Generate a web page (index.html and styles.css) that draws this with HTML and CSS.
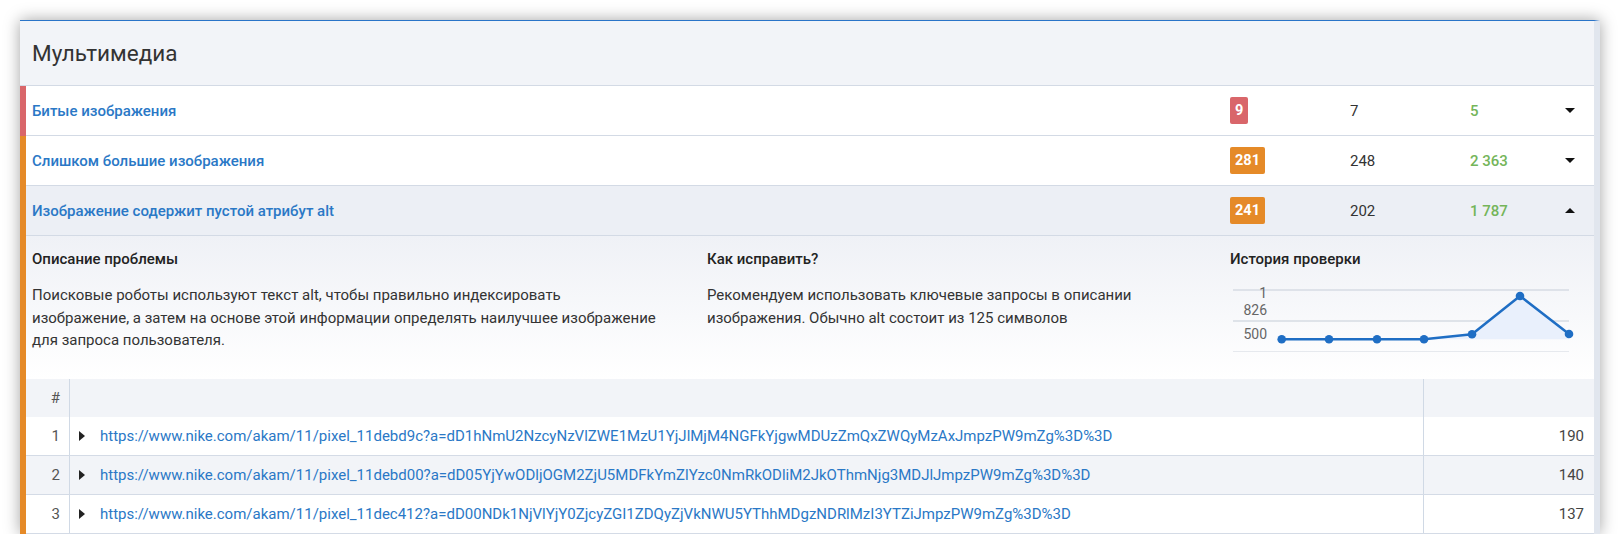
FILE: index.html
```html
<!DOCTYPE html>
<html lang="ru">
<head>
<meta charset="utf-8">
<title>Мультимедиа</title>
<link rel="stylesheet" href="styles.css">
</head>
<body>
<div class="page">
  <section class="card">
    <header class="card-head"><h2 class="card-title">Мультимедиа</h2></header>

    <div class="group group--red">
      <div class="issue">
        <a class="issue-name">Битые изображения</a>
        <div><span class="badge badge--red">9</span></div>
        <div class="count">7</div>
        <div class="fixed">5</div>
        <div class="toggle"><span class="caret caret--down"></span></div>
      </div>
    </div>

    <div class="group group--orange">
      <div class="issue">
        <a class="issue-name">Слишком большие изображения</a>
        <div><span class="badge badge--orange">281</span></div>
        <div class="count">248</div>
        <div class="fixed">2 363</div>
        <div class="toggle"><span class="caret caret--down"></span></div>
      </div>
      <div class="issue issue--open">
        <a class="issue-name">Изображение содержит пустой атрибут alt</a>
        <div><span class="badge badge--orange">241</span></div>
        <div class="count">202</div>
        <div class="fixed">1 787</div>
        <div class="toggle"><span class="caret caret--up"></span></div>
      </div>

      <div class="details">
        <div class="detail-col">
          <h3 class="detail-title">Описание проблемы</h3>
          <p class="detail-text">Поисковые роботы используют текст alt, чтобы правильно индексировать<br>изображение, а затем на основе этой информации определять наилучшее изображение<br>для запроса пользователя.</p>
        </div>
        <div class="detail-col">
          <h3 class="detail-title">Как исправить?</h3>
          <p class="detail-text">Рекомендуем использовать ключевые запросы в описании<br>изображения. Обычно alt состоит из 125 символов</p>
        </div>
        <div class="detail-col">
          <h3 class="detail-title">История проверки</h3>
          <svg class="chart" width="350" height="74" viewBox="0 0 350 74">
            <line x1="3" y1="8" x2="339" y2="8" class="grid"/>
            <line x1="3" y1="39" x2="339" y2="39" class="grid"/>
            <line x1="3" y1="69.5" x2="339" y2="69.5" class="grid grid--light"/>
            <text x="37" y="16" class="axis">1</text>
            <text x="37" y="33" class="axis">826</text>
            <text x="37" y="57" class="axis">500</text>
            <polygon class="area" points="51.7,57.3 99,57.3 147,57.3 194,57.3 242,52.3 290,14 339,52 339,57.3"/>
            <polyline class="line" points="51.7,57.3 99,57.3 147,57.3 194,57.3 242,52.3 290,14 339,52"/>
            <circle cx="51.7" cy="57.3" r="4.3" class="dot"/>
            <circle cx="99" cy="57.3" r="4.3" class="dot"/>
            <circle cx="147" cy="57.3" r="4.3" class="dot"/>
            <circle cx="194" cy="57.3" r="4.3" class="dot"/>
            <circle cx="242" cy="52.3" r="4.3" class="dot"/>
            <circle cx="290" cy="14" r="4.3" class="dot"/>
            <circle cx="339" cy="52" r="4.3" class="dot"/>
          </svg>
        </div>
      </div>

      <div class="table">
        <div class="trow trow--head">
          <div class="tcell tcell--num">#</div>
          <div class="tcell tcell--url"></div>
          <div class="tcell tcell--val"></div>
        </div>
        <div class="trow">
          <div class="tcell tcell--num">1</div>
          <div class="tcell tcell--url"><span class="caret caret--right"></span><a class="url">https://www.nike.com/akam/11/pixel_11debd9c?a=dD1hNmU2NzcyNzVlZWE1MzU1YjJlMjM4NGFkYjgwMDUzZmQxZWQyMzAxJmpzPW9mZg%3D%3D</a></div>
          <div class="tcell tcell--val">190</div>
        </div>
        <div class="trow trow--alt">
          <div class="tcell tcell--num">2</div>
          <div class="tcell tcell--url"><span class="caret caret--right"></span><a class="url">https://www.nike.com/akam/11/pixel_11debd00?a=dD05YjYwODljOGM2ZjU5MDFkYmZlYzc0NmRkODliM2JkOThmNjg3MDJlJmpzPW9mZg%3D%3D</a></div>
          <div class="tcell tcell--val">140</div>
        </div>
        <div class="trow">
          <div class="tcell tcell--num">3</div>
          <div class="tcell tcell--url"><span class="caret caret--right"></span><a class="url">https://www.nike.com/akam/11/pixel_11dec412?a=dD00NDk1NjVlYjY0ZjcyZGI1ZDQyZjVkNWU5YThhMDgzNDRlMzI3YTZiJmpzPW9mZg%3D%3D</a></div>
          <div class="tcell tcell--val">137</div>
        </div>
      </div>
    </div>
  </section>
</div>
</body>
</html>
```

FILE: styles.css
```css
* { box-sizing: border-box; }

body {
  margin: 0;
  background: #fff;
  font-family: Roboto, "Noto Sans", "Liberation Sans", sans-serif;
  color: #333;
}

.page {
  padding: 20px 0 0 20px;
}

.card {
  width: 1580px;
  background: #fff;
  border-top: 1px solid #2a74c8;
  border-right: 6px solid #e1e6ee;
  box-shadow: 0 0 15px rgba(0, 0, 0, 0.36);
}

.card-head {
  height: 65px;
  background: #f2f4f8;
  border-bottom: 1px solid #d3dae5;
  display: flex;
  align-items: center;
  padding-left: 12px;
}

.card-title {
  margin: 0;
  font-size: 22.5px;
  font-weight: 400;
  color: #333;
}

.group {
  border-left: 6px solid transparent;
}
.group--red { border-left-color: #d9666a; }
.group--orange { border-left-color: #e58a28; }

.issue {
  display: grid;
  grid-template-columns: 1fr 120px 120px 76px 48px;
  align-items: center;
  height: 50px;
  padding-left: 6px;
  border-bottom: 1px solid #d3dae5;
  background: #fff;
}
.issue--open { background: #eceff5; }

.issue-name {
  font-size: 15px;
  font-weight: 500;
  color: #2a78c6;
}

.badge {
  display: inline-block;
  height: 27px;
  line-height: 27px;
  padding: 0 5px;
  border-radius: 2px;
  color: #fff;
  font-size: 14.5px;
  font-weight: 700;
}
.badge--red { background: #d9666a; }
.badge--orange { background: #e58a28; }

.count {
  font-size: 15px;
  color: #333;
}

.fixed {
  font-size: 15px;
  font-weight: 500;
  color: #74b55a;
}

.toggle {
  display: flex;
  justify-content: center;
}

.caret {
  display: inline-block;
  width: 0;
  height: 0;
}
.caret--down {
  border-left: 5px solid transparent;
  border-right: 5px solid transparent;
  border-top: 5px solid #111;
}
.caret--up {
  border-left: 5px solid transparent;
  border-right: 5px solid transparent;
  border-bottom: 5px solid #111;
}
.caret--right {
  border-top: 5px solid transparent;
  border-bottom: 5px solid transparent;
  border-left: 6px solid #222;
  margin-right: 15px;
  flex: none;
}

.details {
  display: grid;
  grid-template-columns: 675px 523px 1fr;
  height: 143px;
  padding: 13px 0 0 6px;
  background: linear-gradient(#eff1f6, #ffffff);
}

.detail-title {
  margin: 0;
  font-size: 15px;
  line-height: 20px;
  font-weight: 500;
  color: #222;
}

.detail-text {
  margin: 15px 0 0;
  font-size: 15px;
  line-height: 22.5px;
  color: #333;
}

.chart {
  display: block;
  margin-top: 13px;
  overflow: visible;
}
.chart .grid { stroke: #d6dbe3; stroke-width: 1.5; }
.chart .grid--light { stroke: #e6e9ee; stroke-width: 1; }
.chart .axis {
  font-family: Roboto, "Noto Sans", sans-serif;
  font-size: 14px;
  fill: #666;
  text-anchor: end;
}
.chart .area { fill: #e9f0fc; }
.chart .line { fill: none; stroke: #1f6ec4; stroke-width: 2.5; stroke-linejoin: round; }
.chart .dot { fill: #1f6ec4; }

.trow {
  display: grid;
  grid-template-columns: 44px 1fr 170px;
  height: 39px;
  border-bottom: 1px solid #d4dbe6;
  background: #fff;
}
.trow--head {
  height: 38px;
  border-bottom: none;
  background: #f2f4f8;
}
.trow--alt { background: #f2f4f8; }

.tcell {
  display: flex;
  align-items: center;
  font-size: 15px;
  color: #444;
}
.tcell--num {
  justify-content: flex-end;
  padding-right: 9px;
  border-right: 1px solid #d0d9e5;
  color: #555;
}
.tcell--url {
  padding-left: 9px;
  border-right: 1px solid #d0d9e5;
  white-space: nowrap;
  overflow: hidden;
}
.tcell--val {
  justify-content: flex-end;
  padding-right: 10px;
}

.url {
  color: #2a78c6;
  font-size: 15px;
}
```
